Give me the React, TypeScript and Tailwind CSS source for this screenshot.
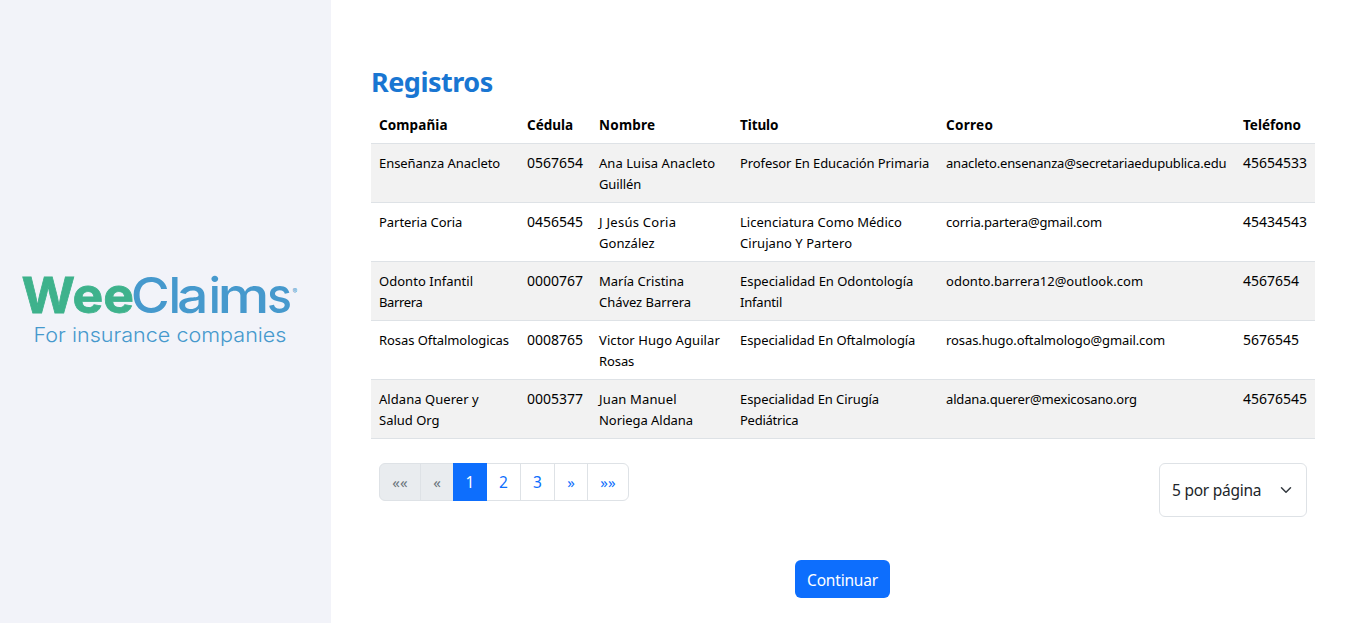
const columns = [
  { label: "Compañia", style: "w-[148px]", text: "tracking-[0.1px]" },
  { label: "Cédula", style: "w-[72px]", text: "tracking-[0px]" },
  { label: "Nombre", style: "w-[141px]", text: "tracking-[0.25px]" },
  { label: "Titulo", style: "w-[206px]", text: "tracking-[-0.1px]" },
  { label: "Correo", style: "w-[297px]", text: "tracking-[0.3px]" },
  { label: "Teléfono", style: "w-[80px]", text: "tracking-[0px]" },
];

type Line = [text: string, style: string];

const digits = "text-[14px]";

const rows: Line[][][] = [
  [
    [["Enseñanza Anacleto", "tracking-[-0.05px]"]],
    [["0567654", digits]],
    [["Ana Luisa Anacleto", "tracking-[0.05px]"], ["Guillén", "tracking-[-0.1px]"]],
    [["Profesor En Educación Primaria", "tracking-[-0.09px]"]],
    [["anacleto.ensenanza@secretariaedupublica.edu", "tracking-[-0.17px]"]],
    [["45654533", digits]],
  ],
  [
    [["Parteria Coria", "tracking-[-0.05px]"]],
    [["0456545", digits]],
    [["J Jesús Coria", "tracking-[0.27px]"], ["González", "tracking-[0.03px]"]],
    [["Licenciatura Como Médico", "tracking-[0.03px]"], ["Cirujano Y Partero", "tracking-[0.05px]"]],
    [["corria.partera@gmail.com", "tracking-[-0.15px]"]],
    [["45434543", digits]],
  ],
  [
    [["Odonto Infantil", "tracking-[0.03px]"], ["Barrera", "tracking-[-0.35px]"]],
    [["0000767", digits]],
    [["María Cristina", "tracking-[0px]"], ["Chávez Barrera", "tracking-[-0.05px]"]],
    [["Especialidad En Odontología", "tracking-[-0.03px]"], ["Infantil", "tracking-[-0.2px]"]],
    [["odonto.barrera12@outlook.com", "tracking-[0.03px]"]],
    [["4567654", digits]],
  ],
  [
    [["Rosas Oftalmologicas", "tracking-[-0.07px]"]],
    [["0008765", digits]],
    [["Victor Hugo Aguilar", "tracking-[0.08px]"], ["Rosas", "tracking-[-0.1px]"]],
    [["Especialidad En Oftalmología", "tracking-[-0.08px]"]],
    [["rosas.hugo.oftalmologo@gmail.com", "tracking-[-0.09px]"]],
    [["5676545", digits]],
  ],
  [
    [["Aldana Querer y", "tracking-[0.05px]"], ["Salud Org", "tracking-[0px]"]],
    [["0005377", digits]],
    [["Juan Manuel", "tracking-[0.15px]"], ["Noriega Aldana", "tracking-[-0.05px]"]],
    [["Especialidad En Cirugía", "tracking-[-0.1px]"], ["Pediátrica", "tracking-[-0.25px]"]],
    [["aldana.querer@mexicosano.org", "tracking-[-0.15px]"]],
    [["45676545", digits]],
  ],
];

function Logo() {
  return (
    <svg width="290" height="100" viewBox="15 260 290 100" className="font-['Inter',sans-serif]" aria-label="WeeClaims">
      <g fontSize="50">
        <text x="21.5" y="313.3" textLength="112.5" lengthAdjust="spacingAndGlyphs" fontWeight="700" fill="#3eb28c" stroke="#3eb28c" strokeWidth="0.8">Wee</text>
        <text y="313.3" fontWeight="450" fill="#4699cd">
          <tspan x="130.8" textLength="39" lengthAdjust="spacingAndGlyphs">C</tspan>
          <tspan x="168.5">l</tspan>
          <tspan x="177" textLength="31.5" lengthAdjust="spacingAndGlyphs">a</tspan>
          <tspan x="208.5">i</tspan>
          <tspan x="217.5" textLength="52" lengthAdjust="spacingAndGlyphs">m</tspan>
          <tspan x="267" textLength="25" lengthAdjust="spacingAndGlyphs">s</tspan>
        </text>
      </g>
      <text x="292.5" y="293.5" fontSize="7" fill="#4699cd">®</text>
      <text x="33.5" y="342" fontSize="20" textLength="253" lengthAdjust="spacingAndGlyphs" fill="#4699cd" fontWeight="350">For insurance companies</text>
    </svg>
  );
}

function RecordsTable() {
  return (
    <table className="w-[944px] table-fixed border-collapse text-left text-[14px] leading-[21px] text-black">
      <thead>
        <tr className="border-b border-[#dee2e6]">
          {columns.map((col) => (
            <th key={col.label} className={`${col.style} p-2 font-bold`}>
              <div className="h-[21px]">
                <span className={`text-[13.5px] ${col.text}`}>{col.label}</span>
              </div>
            </th>
          ))}
        </tr>
      </thead>
      <tbody>
        {rows.map((row, i) => (
          <tr key={i} className="h-[59px] border-b border-[#dee2e6] odd:bg-[#f2f2f2]">
            {row.map((lines, j) => (
              <td key={j} className="p-2 align-top whitespace-nowrap">
                {lines.map(([text, style]) => (
                  <div key={text} className="h-[21px]">
                    <span className={style === digits ? style : `text-[13px] ${style}`}>{text}</span>
                  </div>
                ))}
              </td>
            ))}
          </tr>
        ))}
      </tbody>
    </table>
  );
}

const pages = [
  { label: "««", style: "w-[42px] bg-[#e9ecef] text-[#6c757d] rounded-l-md border-[#dee2e6] text-[15px]" },
  { label: "«", style: "w-[34px] -ml-px bg-[#e9ecef] text-[#6c757d] border-[#dee2e6] text-[15px]" },
  { label: "1", style: "w-[34px] -ml-px bg-[#0d6efd] text-white border-[#0d6efd] relative text-[15.5px] pt-0.5" },
  { label: "2", style: "w-[35px] -ml-px text-[#0d6efd] border-[#dee2e6] text-[15.5px] pt-0.5" },
  { label: "3", style: "w-[35px] -ml-px text-[#0d6efd] border-[#dee2e6] text-[15.5px] pt-0.5" },
  { label: "»", style: "w-[34px] -ml-px text-[#0d6efd] border-[#dee2e6] text-[15px]" },
  { label: "»»", style: "w-[42px] -ml-px text-[#0d6efd] rounded-r-md border-[#dee2e6] text-[15px]" },
];

export default function App() {
  return (
    <div className="flex h-[623px] w-full overflow-hidden bg-white font-['Noto_Sans',sans-serif] text-[#212529]">
      <aside className="flex w-[331px] shrink-0 bg-[#f2f3f9] pt-[260px] pl-[15px]">
        <Logo />
      </aside>
      <main className="ml-10 flex w-[944px] flex-col pt-[65px]">
        <h1 className="h-[41px] text-[27px] leading-[34px] font-bold tracking-[-0.5px] text-[#1976d2]">Registros</h1>
        <RecordsTable />
        <div className="mt-6 flex items-start justify-between px-2">
          <nav className="flex">
            {pages.map((p) => (
              <button key={p.label} className={`flex h-[38px] items-center justify-center border ${p.style}`}>{p.label}</button>
            ))}
          </nav>
          <button className="flex h-[54px] w-[148px] items-center justify-between rounded-md border border-[#dee2e6] px-3 text-[15.5px]">
            <span className="pt-0.5 tracking-[-0.25px] whitespace-nowrap">5 por página</span>
            <svg width="16" height="12" viewBox="0 0 16 16" fill="none" stroke="#343a40" strokeWidth="2" strokeLinecap="round" strokeLinejoin="round">
              <path d="m2 5 6 6 6-6" />
            </svg>
          </button>
        </div>
        <button className="mt-[43px] mr-px flex h-[38px] w-[95px] items-center justify-center self-center rounded-md bg-[#0d6efd] pt-[3px] text-[15.5px] tracking-[-0.2px] text-white">Continuar</button>
      </main>
    </div>
  );
}
